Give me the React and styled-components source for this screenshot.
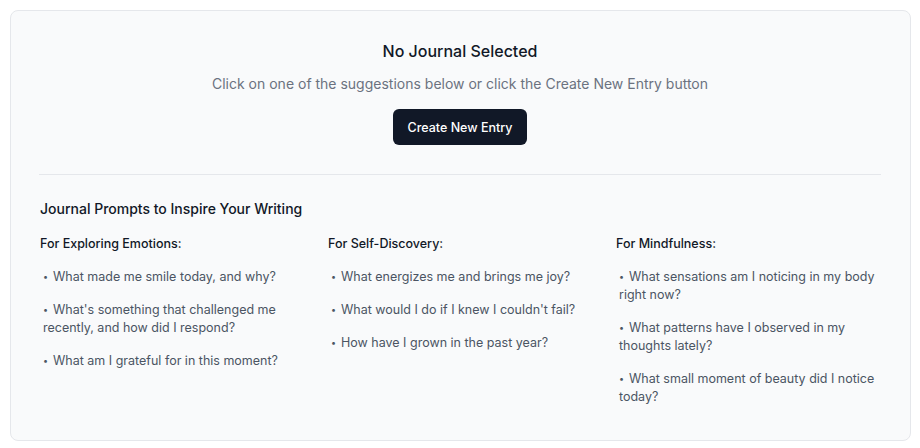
import React from 'react';
import styled, { createGlobalStyle } from 'styled-components';

const GlobalStyle = createGlobalStyle`
  * { box-sizing: border-box; }
  body {
    margin: 0;
    background: #ffffff;
    font-family: Inter, "Noto Sans", sans-serif;
    -webkit-font-smoothing: antialiased;
  }
`;

const Page = styled.div`
  padding: 10px 9px 9px 10px;
`;

const Card = styled.div`
  background: #f9fafb;
  border: 1px solid #e5e7eb;
  border-radius: 8px;
  padding: 26px 29px 34px 28px;
`;

const Empty = styled.section`
  display: flex;
  flex-direction: column;
  align-items: center;
  padding-bottom: 29px;
  border-bottom: 1px solid #e5e7eb;
`;

const Title = styled.h2`
  margin: 0;
  font-size: 16px;
  line-height: 28px;
  font-weight: 450;
  color: #111827;
`;

const Subtitle = styled.p`
  margin: 9px 0 15px;
  font-size: 14px;
  line-height: 20px;
  color: #6b7280;
`;

const Button = styled.button`
  height: 36px;
  padding: 0 15px;
  border: none;
  border-radius: 6px;
  background: #111827;
  color: #ffffff;
  font-family: inherit;
  font-size: 12.5px;
  font-weight: 500;
  cursor: pointer;
`;

const Prompts = styled.section`
  padding: 22px 1px 0;
`;

const PromptsTitle = styled.h3`
  margin: 0 0 13px;
  font-size: 14px;
  line-height: 24px;
  font-weight: 450;
  color: #111827;
`;

const Columns = styled.div`
  display: grid;
  grid-template-columns: repeat(3, 1fr);
  gap: 24px;
`;

const Category = styled.h4`
  margin: 0 0 14px;
  font-size: 12.5px;
  line-height: 20px;
  font-weight: 500;
  color: #111827;
`;

const List = styled.ul`
  list-style: none;
  margin: 0;
  padding: 0;
  display: flex;
  flex-direction: column;
  gap: 15px;
`;

const Item = styled.li`
  padding-left: 3px;
  font-size: 12.5px;
  line-height: 18px;
  color: #4b5563;
  cursor: pointer;
`;

const Bullet = styled.span`
  display: inline-block;
  width: 7px;
  font-size: 9px;
  vertical-align: 1px;
  margin-right: 3px;
`;

const categories = [
  {
    title: 'For Exploring Emotions:',
    prompts: [
      'What made me smile today, and why?',
      "What's something that challenged me recently, and how did I respond?",
      'What am I grateful for in this moment?',
    ],
  },
  {
    title: 'For Self-Discovery:',
    prompts: [
      'What energizes me and brings me joy?',
      "What would I do if I knew I couldn't fail?",
      'How have I grown in the past year?',
    ],
  },
  {
    title: 'For Mindfulness:',
    prompts: [
      'What sensations am I noticing in my body right now?',
      'What patterns have I observed in my thoughts lately?',
      'What small moment of beauty did I notice today?',
    ],
  },
];

export default function App() {
  return (
    <Page>
      <GlobalStyle />
      <Card>
        <Empty>
          <Title>No Journal Selected</Title>
          <Subtitle>
            Click on one of the suggestions below or click the Create New Entry button
          </Subtitle>
          <Button>Create New Entry</Button>
        </Empty>

        <Prompts>
          <PromptsTitle>Journal Prompts to Inspire Your Writing</PromptsTitle>
          <Columns>
            {categories.map(cat => (
              <div key={cat.title}>
                <Category>{cat.title}</Category>
                <List>
                  {cat.prompts.map(p => (
                    <Item key={p}>
                      <Bullet>•</Bullet>
                      {p}
                    </Item>
                  ))}
                </List>
              </div>
            ))}
          </Columns>
        </Prompts>
      </Card>
    </Page>
  );
}
